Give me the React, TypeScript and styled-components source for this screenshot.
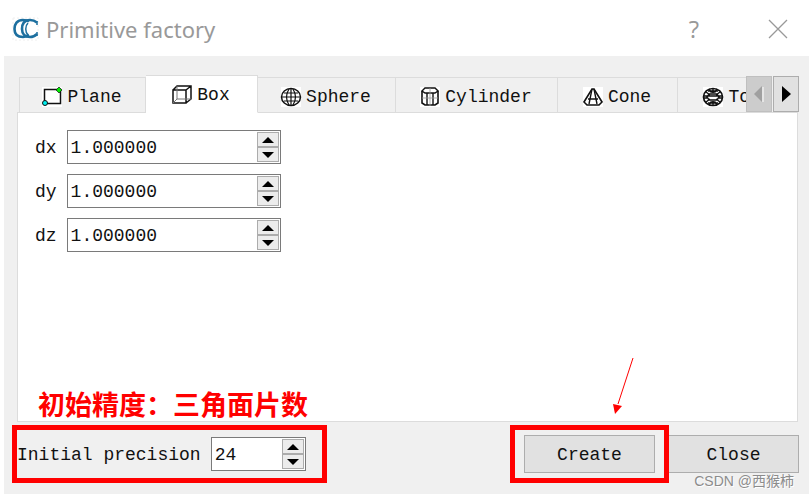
import React, { useState } from "react";
import styled, { createGlobalStyle, css } from "styled-components";

const mono = `"Liberation Mono", "Noto Sans CJK SC", monospace`;

const GlobalStyle = createGlobalStyle`
  * { box-sizing: border-box; }
  body { margin: 0; background: #fff; }
  button, input { font: inherit; color: inherit; }
`;

const Dialog = styled.main`
  display: flex;
  flex-direction: column;
  min-height: 100vh;
  padding: 0 0 3px 4px;
  font: 18px/24px ${mono};
  color: #111;
  overflow: hidden;
`;

const TitleBar = styled.header`
  display: flex;
  align-items: center;
  height: 56px;
  padding: 2px 21px 0 8px;
  gap: 6px;
  color: #999;
`;

const Title = styled.h1`
  flex: 1;
  margin: 0;
  font: 400 22px/28px "Noto Sans", sans-serif;
`;

const TitleButton = styled.button`
  display: grid;
  place-items: center;
  width: 20px;
  height: 28px;
  margin-left: 58px;
  padding: 0;
  border: 0;
  background: none;
  font: 24px/28px "Open Sans", sans-serif;
`;

const Body = styled.section`
  flex: 1;
  display: flex;
  flex-direction: column;
  padding: 19px 11px 0 13px;
  background: #f0f0f0;
`;

const TabStrip = styled.div`
  display: flex;
  align-items: flex-end;
  height: 38px;
  margin-bottom: -1px;
  padding-left: 2px;
  z-index: 1;
`;

const TabList = styled.div`
  flex: 1;
  min-width: 0;
  display: flex;
  align-items: flex-end;
  overflow: hidden;
`;

const Tab = styled.button<{ $width: number; $selected: boolean }>`
  display: flex;
  flex: none;
  align-items: center;
  justify-content: center;
  gap: 4px;
  width: ${(p) => p.$width}px;
  height: 36px;
  padding: 4px 2px 0 0;
  border: 1px solid #dcdcdc;
  border-left-width: 0;
  background: #f0f0f0;
  &:first-child { border-left-width: 1px; }
  ${(p) =>
    p.$selected &&
    css`
      height: 38px;
      padding: 1px 2px 0 0;
      border-bottom-color: #fff;
      background: #fff;
    `}
`;

const TabScroll = styled.button`
  display: grid;
  place-items: center;
  flex: none;
  width: 26px;
  height: 36px;
  margin: 0 -1px 1px 1px;
  padding: 0;
  border: 1px solid #adadad;
  background: #e1e1e1;
  &:disabled {
    margin: 0 0 1px;
    border-color: #bfbfbf;
    background: #ccc;
    color: #a0a0a0;
  }
`;

const Pane = styled.div`
  flex: 1;
  position: relative;
  display: flex;
  flex-direction: column;
  gap: 10px;
  padding: 17px;
  border: 1px solid #dcdcdc;
  background: #fff;
`;

const Field = styled.label`
  display: flex;
  align-items: center;
  gap: 10px;
`;

const FieldText = styled.span`
  padding-top: 2px;
`;

const SpinFrame = styled.span<{ $width: number }>`
  display: flex;
  width: ${(p) => p.$width}px;
  height: 34px;
  padding: 1px;
  border: 1px solid #7a7a7a;
  background: #fff;
`;

const SpinInput = styled.input`
  flex: 1;
  min-width: 0;
  padding: 2px 2px 0;
  border: 0;
  outline: 0;
  background: transparent;
`;

const Steps = styled.span`
  display: grid;
  grid-template-rows: 1fr 1fr;
  width: 22px;
`;

const Step = styled.button`
  display: grid;
  place-items: center;
  padding: 0;
  border: 1px solid #acacac;
  background: #ececec;
`;

const Footer = styled.footer`
  display: flex;
  align-items: center;
  justify-content: space-between;
  height: 72px;
  padding-bottom: 8px;
  margin-right: -1px;
`;

const Marked = styled.div`
  position: relative;
`;

const Frame = styled.span<{ $right: number; $left: number; $block: number }>`
  position: absolute;
  top: -${(p) => p.$block}px;
  bottom: -${(p) => p.$block}px;
  left: -${(p) => p.$left}px;
  right: -${(p) => p.$right}px;
  z-index: 2;
  border: 5px solid #f00;
  pointer-events: none;
`;

const Actions = styled.div`
  display: flex;
  gap: 13px;
`;

const ActionButton = styled.button`
  display: block;
  width: 131px;
  height: 38px;
  padding: 2px 0 0;
  border: 1px solid #adadad;
  background: #e1e1e1;
`;

const Note = styled.p`
  position: absolute;
  left: 20px;
  bottom: -1px;
  margin: 0;
  color: #f00;
  font: 700 27px/36px "Noto Sans CJK SC", sans-serif;
`;

const Arrow = styled.svg`
  position: absolute;
  right: 162px;
  bottom: 7px;
`;

const Watermark = styled.span`
  position: absolute;
  right: 5px;
  top: 36px;
  z-index: 3;
  color: #8c8c8c;
  font: 14px/20px "Liberation Sans", "Noto Sans CJK SC", sans-serif;
  text-shadow: 1px 1px 0 #fff;
  white-space: nowrap;
  pointer-events: none;
`;

const Logo = () => (
  <svg width="28" height="24" viewBox="0 0 28 24" fill="none" stroke="#1d6f9f">
    <rect x="1" y="1" width="25" height="22" stroke="#eee" strokeDasharray="2 2" />
    <path d="M17 4.500C15 3 13 3 11 3 5 3 2.500 7 2.500 12S5 20 11 20c2 0 4-1 6-2" strokeWidth="2.600" />
    <path d="M25 5.500C22 3 20 3 18 3c-6 0-8 4-8 9s3 8 8 8c3 0 5-1 7-3" strokeWidth="2.600" />
    <path d="M16 6c-3 3-3 9 0 12" strokeWidth="1.500" />
    <path d="M25 4v4M25 15v4" strokeWidth="1.500" />
  </svg>
);

const icons: Record<string, React.ReactNode> = {
  Plane: (
    <>
      <rect x="3.5" y="3.5" width="16" height="14" strokeWidth="1.5" />
      <path d="M18 1l3 3-3 3-3-3z" fill="#0e0" strokeWidth=".7" />
      <circle cx="4" cy="17" r="2.5" fill="#0ee" strokeWidth="1" />
    </>
  ),
  Box: (
    <>
      <path d="M2 6h13v13H2zM2 6l4-4h14v13l-5 4M15 6l5-4" strokeWidth="1.5" />
      <path d="M6 2v13h14M6 15l-4 4" stroke="#777" strokeWidth="1" />
    </>
  ),
  Sphere: (
    <>
      <ellipse cx="11" cy="11" rx="9.5" ry="8.5" strokeWidth="1.5" />
      <path d="M11 2v18M1 11h20M4 7h14M4 15h14M9 3q-5 8 0 16M13 3q5 8 0 16" />
    </>
  ),
  Cylinder: (
    <>
      <path d="M3 5v12l3 2h10l3-2V5" strokeWidth="1.6" />
      <path d="M3 5l3-3h10l3 3-3 2H6zM8 7v12M14 7v12" strokeWidth="1.4" />
      <path d="M3 12h16M11 2v18" stroke="#999" strokeWidth=".8" />
    </>
  ),
  Cone: (
    <>
      <path d="M10 3h2l8 13-3 3H5l-3-3z" strokeWidth="1.6" />
      <path d="M10 3L7 18M12 3l3 15M6 13h10" strokeWidth="1.4" />
    </>
  ),
  Torus: (
    <>
      <ellipse cx="11" cy="11" rx="9.5" ry="8.5" strokeWidth="1.7" />
      <path d="M7 8h8l2 3-2 3H7l-2-3zM1 10h20M1 12h4M17 12h4M7 3l2 3h4l2-3M7 19l2-3h4l2 3M11 3v4M11 15v4M4 6l4 3M18 6l-4 3M4 16l4-3M18 16l-4-3M6 5h10M6 17h10" strokeWidth="1.4" />
    </>
  ),
};

const TabIcon = ({ name }: { name: string }) => (
  <svg width="22" height="22" viewBox="0 0 22 22" fill="none" stroke="#111" strokeWidth="1.2">
    <rect x="1" y="1" width="20" height="20" fill="#fff" stroke="none" />
    {icons[name]}
  </svg>
);

function SpinBox({ id, width, initial, digits }: { id: string; width: number; initial: number; digits: number }) {
  const [value, setValue] = useState(initial.toFixed(digits));
  const step = (by: number) => setValue((Number(value) + by).toFixed(digits));
  return (
    <SpinFrame $width={width}>
      <SpinInput id={id} value={value} onChange={(e) => setValue(e.target.value)} />
      <Steps>
        <Step type="button" aria-label="Increase" onClick={() => step(1)}>
          <svg width="12" height="6"><path d="M0 6l6-6 6 6z" /></svg>
        </Step>
        <Step type="button" aria-label="Decrease" onClick={() => step(-1)}>
          <svg width="12" height="6"><path d="M0 0h12L6 6z" /></svg>
        </Step>
      </Steps>
    </SpinFrame>
  );
}

const tabs = [
  { name: "Plane", width: 127 },
  { name: "Box", width: 112 },
  { name: "Sphere", width: 138 },
  { name: "Cylinder", width: 162 },
  { name: "Cone", width: 120 },
  { name: "Torus", width: 132 },
];

export default function App() {
  const [selected, setSelected] = useState("Box");
  return (
    <>
      <GlobalStyle />
      <Dialog>
        <TitleBar>
          <Logo />
          <Title>Primitive factory</Title>
          <TitleButton type="button" aria-label="Help">?</TitleButton>
          <TitleButton type="button" aria-label="Close window">
            <svg width="20" height="20" stroke="#999" strokeWidth="1.3"><path d="M1 1l18 18M19 1L1 19" /></svg>
          </TitleButton>
        </TitleBar>
        <Body>
          <TabStrip>
            <TabList role="tablist">
              {tabs.map((t) => (
                <Tab
                  key={t.name}
                  type="button"
                  role="tab"
                  aria-selected={t.name === selected}
                  $width={t.width}
                  $selected={t.name === selected}
                  onClick={() => setSelected(t.name)}
                >
                  <TabIcon name={t.name} />
                  {t.name}
                </Tab>
              ))}
            </TabList>
            <TabScroll type="button" aria-label="Scroll tabs left" disabled>
              <svg width="10" height="16"><path d="M8 0v16L0 8z" fill="#a0a0a0" /><path d="M9 1v15" stroke="#fff" /></svg>
            </TabScroll>
            <TabScroll type="button" aria-label="Scroll tabs right">
              <svg width="10" height="16"><path d="M1 0v16l9-8z" /></svg>
            </TabScroll>
          </TabStrip>
          <Pane role="tabpanel">
            {["dx", "dy", "dz"].map((axis) => (
              <Field key={axis} htmlFor={axis}>
                <FieldText>{axis}</FieldText>
                <SpinBox id={axis} width={214} initial={1} digits={6} />
              </Field>
            ))}
            <Note>初始精度：三角面片数</Note>
            <Arrow width="22" height="58" viewBox="0 0 22 58">
              <path d="M20 2L5 48" stroke="#f00" />
              <path d="M0 48l9 2-7 8z" fill="#f00" />
            </Arrow>
          </Pane>
          <Footer>
            <Marked>
              <Field htmlFor="precision">
                <FieldText>Initial precision</FieldText>
                <SpinBox id="precision" width={95} initial={24} digits={0} />
              </Field>
              <Frame $left={5} $right={21} $block={12} />
            </Marked>
            <Actions>
              <Marked>
                <ActionButton type="button">Create</ActionButton>
                <Frame $left={14} $right={14} $block={10} />
              </Marked>
              <Marked>
                <ActionButton type="button">Close</ActionButton>
                <Watermark>CSDN @西猴柿</Watermark>
              </Marked>
            </Actions>
          </Footer>
        </Body>
      </Dialog>
    </>
  );
}
